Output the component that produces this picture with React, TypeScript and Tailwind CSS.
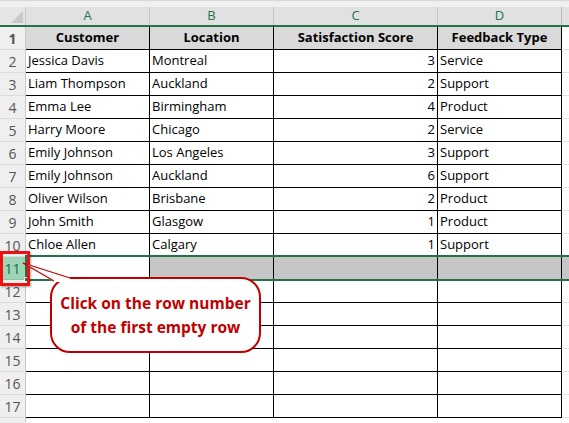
const rows: [string, string, number, string][] = [
  ["Jessica Davis", "Montreal", 3, "Service"],
  ["Liam Thompson", "Auckland", 2, "Support"],
  ["Emma Lee", "Birmingham", 4, "Product"],
  ["Harry Moore", "Chicago", 2, "Service"],
  ["Emily Johnson", "Los Angeles", 3, "Support"],
  ["Emily Johnson", "Auckland", 6, "Support"],
  ["Oliver Wilson", "Brisbane", 2, "Product"],
  ["John Smith", "Glasgow", 1, "Product"],
  ["Chloe Allen", "Calgary", 1, "Support"],
];

const cell = "box-border h-full shrink-0 border-r border-b border-black flex items-center px-[2px] overflow-hidden whitespace-nowrap";

function RowHead({ n, active }: { n: number; active?: boolean }) {
  return (
    <div
      className={
        "box-border h-full w-[26px] shrink-0 flex items-center justify-center border-b border-r text-[14px] " +
        (active
          ? "bg-[#9fd5b7] text-[#1e6b41] border-b-[#8cc4a4] border-r-[#217346]"
          : "bg-[#efefef] text-[#555555] border-b-[#dcdcdc] border-r-[#c8c8c8]")
      }
    >
      {n}
    </div>
  );
}

function EmptyRow({ n }: { n: number }) {
  return (
    <div className="flex h-[23px] text-[13px]">
      <RowHead n={n} />
      <div className={cell + " w-[124px]"} />
      <div className={cell + " w-[124px]"} />
      <div className={cell + " w-[164px]"} />
      <div className={cell + " w-[124px]"} />
      <div className="flex-1 border-b border-[#e1e1e1]" />
    </div>
  );
}

export default function App() {
  return (
    <div
      className="relative w-[569px] h-[423px] overflow-hidden bg-white text-black"
      style={{ fontFamily: '"Open Sans", "Noto Sans", sans-serif' }}
    >
      {/* strip above headers */}
      <div className="h-[7px] bg-[#eef1ef] border-t border-[#d8d8d8]" />

      {/* column headers */}
      <div className="flex h-[20px] bg-[#e1e1e1] border-b-2 border-[#217346] text-[13px] text-[#217346]">
        <div className="relative box-border w-[26px] shrink-0 border-r border-[#c8c8c8] bg-[#e6e6e6]">
          <div className="absolute right-[2px] bottom-[2px] w-0 h-0 border-l-[12px] border-l-transparent border-b-[12px] border-b-[#c9c9c9]" />
        </div>
        <div className="box-border w-[124px] shrink-0 border-r border-[#c4c4c4] flex items-center justify-center">A</div>
        <div className="box-border w-[124px] shrink-0 border-r border-[#c4c4c4] flex items-center justify-center">B</div>
        <div className="box-border w-[164px] shrink-0 border-r border-[#c4c4c4] flex items-center justify-center">C</div>
        <div className="box-border w-[124px] shrink-0 border-r border-[#b8b8b8] flex items-center justify-center">D</div>
        <div className="flex-1" />
      </div>

      {/* header row */}
      <div className="flex h-[23px] text-[13px] font-bold">
        <RowHead n={1} />
        <div className={cell + " w-[124px] justify-center bg-[#d9d9d9]"}>Customer</div>
        <div className={cell + " w-[124px] justify-center bg-[#d9d9d9]"}>Location</div>
        <div className={cell + " w-[164px] justify-center bg-[#d9d9d9]"}>Satisfaction Score</div>
        <div className={cell + " w-[124px] justify-center bg-[#d9d9d9]"}>Feedback Type</div>
        <div className="flex-1 border-b border-[#e1e1e1]" />
      </div>

      {rows.map((r, i) => (
        <div key={i} className="flex h-[23px] text-[13px]">
          <RowHead n={i + 2} />
          <div className={cell + " w-[124px]"}>{r[0]}</div>
          <div className={cell + " w-[124px]"}>{r[1]}</div>
          <div className={cell + " w-[164px] justify-end"}>{r[2]}</div>
          <div className={cell + " w-[124px]"}>{r[3]}</div>
          <div className="flex-1 border-b border-[#e1e1e1]" />
        </div>
      ))}

      {/* selected row 11 */}
      <div className="flex h-[23px] text-[13px]">
        <RowHead n={11} active />
        <div className={cell + " w-[124px] bg-white"} />
        <div className={cell + " w-[124px] bg-[#c6c6c6]"} />
        <div className={cell + " w-[164px] bg-[#c6c6c6]"} />
        <div className={cell + " w-[124px] bg-[#c6c6c6]"} />
        <div className="flex-1 bg-[#c6c6c6]" />
      </div>

      <EmptyRow n={12} />
      <EmptyRow n={13} />
      <EmptyRow n={14} />
      <EmptyRow n={15} />
      <EmptyRow n={16} />
      <EmptyRow n={17} />

      <div className="flex h-[23px]">
        <div className="w-[26px] bg-[#efefef] border-r border-[#c8c8c8]" />
      </div>

      {/* selection outline */}
      <div className="absolute top-[255px] left-[25px] w-[560px] h-[26px] border-2 border-[#217346]" />
      <div className="absolute top-[277px] left-[24px] w-[5px] h-[5px] bg-[#217346] border border-white" />

      {/* red highlight around row number */}
      <div className="absolute top-[251px] left-0 w-[30px] h-[35px] border-[3px] border-[#ee1111] shadow-[1px_1px_2px_rgba(0,0,0,0.35)]" />

      {/* callout */}
      <div className="absolute top-[277px] left-[50px] w-[211px] h-[76px] rounded-[20px] border-2 border-[#c00000] bg-white flex flex-col items-center justify-center text-[#c00000] text-[15.5px] font-bold leading-[24px]">
        <span>Click on the row number</span>
        <span>of the first empty row</span>
      </div>
      <svg className="absolute left-0 top-0" width="569" height="423" viewBox="0 0 569 423">
        <polygon points="23,263 54,282 70,282 70,277" fill="white" />
        <line x1="23" y1="263" x2="54" y2="281" stroke="#c00000" strokeWidth="1.3" />
        <line x1="23" y1="263" x2="70" y2="278" stroke="#c00000" strokeWidth="1.3" />
      </svg>
    </div>
  );
}
